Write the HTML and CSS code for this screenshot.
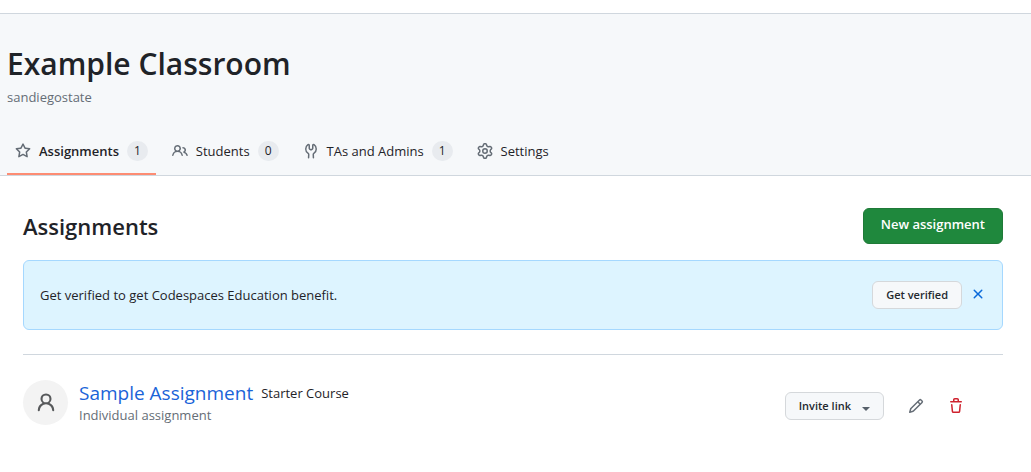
FILE: index.html
```html
<!DOCTYPE html>
<html lang="en">
<head>
<meta charset="utf-8">
<meta name="viewport" content="width=device-width, initial-scale=1">
<title>Example Classroom</title>
<link rel="stylesheet" href="styles.css">
</head>
<body>
<header class="page-header">
  <h1 class="page-title">Example Classroom</h1>
  <p class="page-org">sandiegostate</p>
  <nav class="tabs" aria-label="Classroom">
    <a class="tab tab-active" href="#assignments" aria-current="page">
      <svg class="icon" viewBox="0 0 16 16" aria-hidden="true"><path d="M8 .25a.75.75 0 0 1 .673.418l1.882 3.815 4.21.612a.75.75 0 0 1 .416 1.279l-3.046 2.97.719 4.192a.751.751 0 0 1-1.088.791L8 12.347l-3.766 1.98a.75.75 0 0 1-1.088-.79l.72-4.194L.818 6.374a.75.75 0 0 1 .416-1.28l4.21-.611L7.327.668A.75.75 0 0 1 8 .25Zm0 2.445L6.615 5.5a.75.75 0 0 1-.564.41l-3.097.45 2.24 2.184a.75.75 0 0 1 .216.664l-.528 3.084 2.769-1.456a.75.75 0 0 1 .698 0l2.77 1.456-.53-3.084a.75.75 0 0 1 .216-.664l2.24-2.183-3.096-.45a.75.75 0 0 1-.564-.41L8 2.694Z"/></svg>
      <span>Assignments</span>
      <span class="counter">1</span>
    </a>
    <a class="tab" href="#students">
      <svg class="icon" viewBox="0 0 16 16" aria-hidden="true"><path d="M2 5.5a3.5 3.5 0 1 1 5.898 2.549 5.508 5.508 0 0 1 3.034 4.084.75.75 0 1 1-1.482.235 4 4 0 0 0-7.9 0 .75.75 0 0 1-1.482-.236A5.507 5.507 0 0 1 3.102 8.05 3.493 3.493 0 0 1 2 5.5ZM11 4a3.001 3.001 0 0 1 2.22 5.018 5.01 5.01 0 0 1 2.56 3.012.749.749 0 0 1-.885.954.752.752 0 0 1-.549-.514 3.507 3.507 0 0 0-2.522-2.372.75.75 0 0 1-.574-.73v-.352a.75.75 0 0 1 .416-.672A1.5 1.5 0 0 0 11 5.5.75.75 0 0 1 11 4Zm-5.5-.5a2 2 0 1 0-.001 3.999A2 2 0 0 0 5.5 3.5Z"/></svg>
      <span>Students</span>
      <span class="counter">0</span>
    </a>
    <a class="tab" href="#admins">
      <svg class="icon" viewBox="0 0 16 16" aria-hidden="true"><path d="M5.433 2.304A4.494 4.494 0 0 0 3.5 6c0 1.598.832 3.002 2.09 3.802.518.328.929.923.902 1.64v.008l-.164 3.337a.75.75 0 1 1-1.498-.073l.163-3.33c.002-.085-.05-.216-.207-.316A5.996 5.996 0 0 1 2 6a5.993 5.993 0 0 1 2.567-4.92 1.482 1.482 0 0 1 1.673-.04c.462.296.76.827.76 1.423v2.82c0 .082.041.16.11.206l.75.51a.25.25 0 0 0 .28 0l.75-.51A.249.249 0 0 0 9 5.282V2.463c0-.596.298-1.127.76-1.423a1.482 1.482 0 0 1 1.673.04A5.993 5.993 0 0 1 14 6a5.996 5.996 0 0 1-2.786 5.068c-.157.1-.209.23-.207.315l.163 3.33a.75.75 0 0 1-1.498.074l-.164-3.345c-.027-.717.384-1.312.902-1.64A4.495 4.495 0 0 0 12.5 6a4.494 4.494 0 0 0-1.933-3.696c-.024.017-.067.067-.067.16v2.818a1.75 1.75 0 0 1-.767 1.448l-.75.51a1.75 1.75 0 0 1-1.966 0l-.75-.51A1.75 1.75 0 0 1 5.5 5.282V2.463c0-.092-.043-.142-.067-.159Z"/></svg>
      <span>TAs and Admins</span>
      <span class="counter">1</span>
    </a>
    <a class="tab" href="#settings">
      <svg class="icon" viewBox="0 0 16 16" aria-hidden="true"><path d="M8 0a8.2 8.2 0 0 1 .701.031C9.444.095 9.99.645 10.16 1.29l.288 1.107c.018.066.079.158.212.224.231.114.454.243.668.386.123.082.233.09.299.071l1.103-.303c.644-.176 1.392.021 1.82.63.27.385.506.792.704 1.218.315.675.111 1.422-.364 1.891l-.814.806c-.049.048-.098.147-.088.294.016.257.016.515 0 .772-.01.147.038.246.088.294l.814.806c.475.469.679 1.216.364 1.891a7.977 7.977 0 0 1-.704 1.217c-.428.61-1.176.807-1.82.63l-1.102-.302c-.067-.019-.177-.011-.3.071a5.909 5.909 0 0 1-.668.386c-.133.066-.194.158-.211.224l-.29 1.106c-.168.646-.715 1.196-1.458 1.26a8.006 8.006 0 0 1-1.402 0c-.743-.064-1.289-.614-1.458-1.26l-.289-1.106c-.018-.066-.079-.158-.212-.224a5.738 5.738 0 0 1-.668-.386c-.123-.082-.233-.09-.299-.071l-1.103.303c-.644.176-1.392-.021-1.82-.63a8.12 8.12 0 0 1-.704-1.218c-.315-.675-.111-1.422.363-1.891l.815-.806c.05-.048.098-.147.088-.294a6.214 6.214 0 0 1 0-.772c.01-.147-.038-.246-.088-.294l-.815-.806C.635 6.045.431 5.298.746 4.623a7.92 7.92 0 0 1 .704-1.217c.428-.61 1.176-.807 1.82-.63l1.102.302c.067.019.177.011.3-.071.214-.143.437-.272.668-.386.133-.066.194-.158.211-.224l.29-1.106C6.009.645 6.556.095 7.299.03 7.53.01 7.764 0 8 0Zm-.571 1.525c-.036.003-.108.036-.137.146l-.289 1.105c-.147.561-.549.967-.998 1.189-.173.086-.34.183-.5.29-.417.278-.97.423-1.529.27l-1.103-.303c-.109-.03-.175.016-.195.045-.22.312-.412.644-.573.99-.014.031-.021.11.059.19l.815.806c.411.406.562.957.53 1.456a4.709 4.709 0 0 0 0 .582c.032.499-.119 1.05-.53 1.456l-.815.806c-.081.08-.073.159-.059.19.162.346.353.677.573.989.02.03.085.076.195.046l1.102-.303c.56-.153 1.113-.008 1.53.27.161.107.328.204.501.29.447.222.85.629.997 1.189l.289 1.105c.029.109.101.143.137.146a6.6 6.6 0 0 0 1.142 0c.036-.003.108-.036.137-.146l.289-1.105c.147-.561.549-.967.998-1.189.173-.086.34-.183.5-.29.417-.278.97-.423 1.529-.27l1.103.303c.109.029.175-.016.195-.045.22-.313.411-.644.573-.99.014-.031.021-.11-.059-.19l-.815-.806c-.411-.406-.562-.957-.53-1.456a4.709 4.709 0 0 0 0-.582c-.032-.499.119-1.05.53-1.456l.815-.806c.081-.08.073-.159.059-.19a6.464 6.464 0 0 0-.573-.989c-.02-.03-.085-.076-.195-.046l-1.102.303c-.56.153-1.113.008-1.53-.27a4.44 4.44 0 0 0-.501-.29c-.447-.222-.85-.629-.997-1.189l-.289-1.105c-.029-.11-.101-.143-.137-.146a6.6 6.6 0 0 0-1.142 0ZM11 8a3 3 0 1 1-6 0 3 3 0 0 1 6 0ZM9.5 8a1.5 1.5 0 1 0-3.001.001A1.5 1.5 0 0 0 9.5 8Z"/></svg>
      <span>Settings</span>
    </a>
  </nav>
</header>

<main class="content" id="assignments">
  <div class="section-head">
    <h2 class="section-title">Assignments</h2>
    <button class="btn-primary" type="button">New assignment</button>
  </div>

  <section class="flash">
    <p class="flash-text">Get verified to get Codespaces Education benefit.</p>
    <button class="btn" type="button">Get verified</button>
    <button class="icon-btn close" type="button" aria-label="Dismiss">
      <svg class="icon" viewBox="0 0 16 16" aria-hidden="true"><path d="M3.72 3.72a.75.75 0 0 1 1.06 0L8 6.94l3.22-3.22a.75.75 0 1 1 1.06 1.06L9.06 8l3.22 3.22a.75.75 0 1 1-1.06 1.06L8 9.06l-3.22 3.22a.75.75 0 0 1-1.06-1.06L6.94 8 3.72 4.78a.75.75 0 0 1 0-1.06Z"/></svg>
    </button>
  </section>

  <article class="assignment">
    <span class="avatar">
      <svg class="avatar-icon" viewBox="0 0 16 16" aria-hidden="true"><path d="M10.561 8.073a6 6 0 0 1 3.432 5.142.75.75 0 1 1-1.498.07 4.5 4.5 0 0 0-8.99 0 .75.75 0 0 1-1.498-.07 6 6 0 0 1 3.431-5.142 4 4 0 1 1 5.123 0ZM10.5 5a2.5 2.5 0 1 0-5 0 2.5 2.5 0 0 0 5 0Z"/></svg>
    </span>
    <div class="details">
      <div class="name-row">
        <a class="name" href="#sample">Sample Assignment</a>
        <span class="label">Starter Course</span>
      </div>
      <p class="kind">Individual assignment</p>
    </div>
    <div class="actions">
      <button class="btn" type="button" aria-haspopup="true">Invite link<span class="caret"></span></button>
      <button class="icon-btn edit" type="button" aria-label="Edit assignment">
        <svg class="icon" viewBox="0 0 16 16" aria-hidden="true"><path d="M11.013 1.427a1.75 1.75 0 0 1 2.474 0l1.086 1.086a1.75 1.75 0 0 1 0 2.474l-8.61 8.61c-.21.21-.47.364-.756.445l-3.251.93a.75.75 0 0 1-.927-.928l.929-3.25c.081-.286.235-.547.445-.758l8.61-8.61Zm.176 4.823L9.75 4.81l-6.286 6.287a.253.253 0 0 0-.064.108l-.558 1.953 1.953-.558a.253.253 0 0 0 .108-.064Zm1.238-3.763a.25.25 0 0 0-.354 0L10.811 3.75l1.439 1.44 1.263-1.263a.25.25 0 0 0 0-.354Z"/></svg>
      </button>
      <button class="icon-btn delete" type="button" aria-label="Delete assignment">
        <svg class="icon" viewBox="0 0 16 16" aria-hidden="true"><path d="M11 1.75V3h2.25a.75.75 0 0 1 0 1.5H2.75a.75.75 0 0 1 0-1.5H5V1.75C5 .784 5.784 0 6.75 0h2.5C10.216 0 11 .784 11 1.75ZM4.496 6.675l.66 6.6a.25.25 0 0 0 .249.225h5.19a.25.25 0 0 0 .249-.225l.66-6.6a.75.75 0 0 1 1.492.149l-.66 6.6A1.748 1.748 0 0 1 10.595 15h-5.19a1.75 1.75 0 0 1-1.741-1.575l-.66-6.6a.75.75 0 1 1 1.492-.15ZM6.5 1.75V3h3V1.75a.25.25 0 0 0-.25-.25h-2.5a.25.25 0 0 0-.25.25Z"/></svg>
      </button>
    </div>
  </article>
</main>
</body>
</html>
```

FILE: styles.css
```css
* {
  box-sizing: border-box;
}

body {
  margin: 0;
  background: #fff;
  color: #1f2328;
  font: 13px/20px "Segoe UI", "Open Sans", "Noto Sans", sans-serif;
}

h1, h2, p {
  margin: 0;
}

a {
  color: inherit;
  text-decoration: none;
}

button {
  font: inherit;
  cursor: pointer;
}

.icon {
  display: block;
  flex: none;
  width: 16px;
  height: 16px;
  fill: currentColor;
}

.page-header {
  margin-top: 13px;
  padding: 27px 7px 0;
  background: #f6f8fa;
  border-top: 1px solid #d0d7de;
  border-bottom: 1px solid #d0d7de;
}

.page-title {
  font-size: 30px;
  font-weight: 600;
  line-height: 46px;
}

.page-org {
  color: #656d76;
}

.tabs {
  display: flex;
  gap: 8px;
  margin-top: 21px;
}

.tab {
  display: flex;
  align-items: center;
  gap: 8px;
  height: 47px;
  padding: 0 8px;
  border-bottom: 2px solid transparent;
  white-space: nowrap;
}

.tab .icon {
  color: #656d76;
}

.tab-active {
  border-bottom-color: #fd8c73;
  font-weight: 600;
}

.counter {
  min-width: 20px;
  padding: 0 7px;
  border-radius: 20px;
  background: #e8ebef;
  font-size: 12px;
  font-weight: 500;
  text-align: center;
}

.content {
  padding: 32px 28px 32px 23px;
}

.section-head {
  display: flex;
  align-items: center;
  justify-content: space-between;
  margin-bottom: 16px;
}

.section-title {
  font-size: 22px;
  font-weight: 600;
  line-height: 36px;
}

.btn-primary {
  height: 36px;
  padding: 0 17px 4px;
  border: 1px solid #1f7a38;
  border-radius: 6px;
  background: #1f883d;
  color: #fff;
  font-weight: 600;
}

.flash {
  display: flex;
  align-items: center;
  padding: 20px 16px;
  border: 1px solid #a5d8ff;
  border-radius: 6px;
  background: #ddf4ff;
}

.flash-text {
  flex: 1;
}

.btn {
  display: flex;
  align-items: center;
  height: 28px;
  padding: 0 13px;
  border: 1px solid #d5d8db;
  border-radius: 6px;
  background: #f6f8fa;
  color: #24292f;
  font-size: 11px;
  font-weight: 600;
}

.icon-btn {
  padding: 0;
  border: 0;
  background: none;
}

.close {
  margin-left: 8px;
  padding-bottom: 2px;
  color: #0969da;
}

.assignment {
  display: flex;
  align-items: center;
  margin-top: 24px;
  padding: 25px 39px 24px 0;
  border-top: 1px solid #d0d7de;
}

.avatar {
  display: flex;
  align-items: center;
  justify-content: center;
  flex: none;
  width: 45px;
  height: 45px;
  border-radius: 50%;
  background: #f3f3f3;
}

.avatar-icon {
  width: 22px;
  height: 22px;
  fill: #57595b;
}

.details {
  flex: 1;
  margin-left: 11px;
}

.name-row {
  display: flex;
  align-items: center;
  gap: 8px;
}

.name {
  color: #1a63d8;
  font-size: 19px;
  line-height: 24px;
}

.kind {
  color: #656d76;
}

.actions {
  display: flex;
  align-items: center;
  gap: 24px;
  margin-top: 6px;
}

.caret {
  margin: 6px 0 0 11px;
  border: 4px solid transparent;
  border-top-color: #57606a;
  border-bottom: 0;
}

.edit {
  color: #656d76;
}

.delete {
  color: #cf222e;
}
```
